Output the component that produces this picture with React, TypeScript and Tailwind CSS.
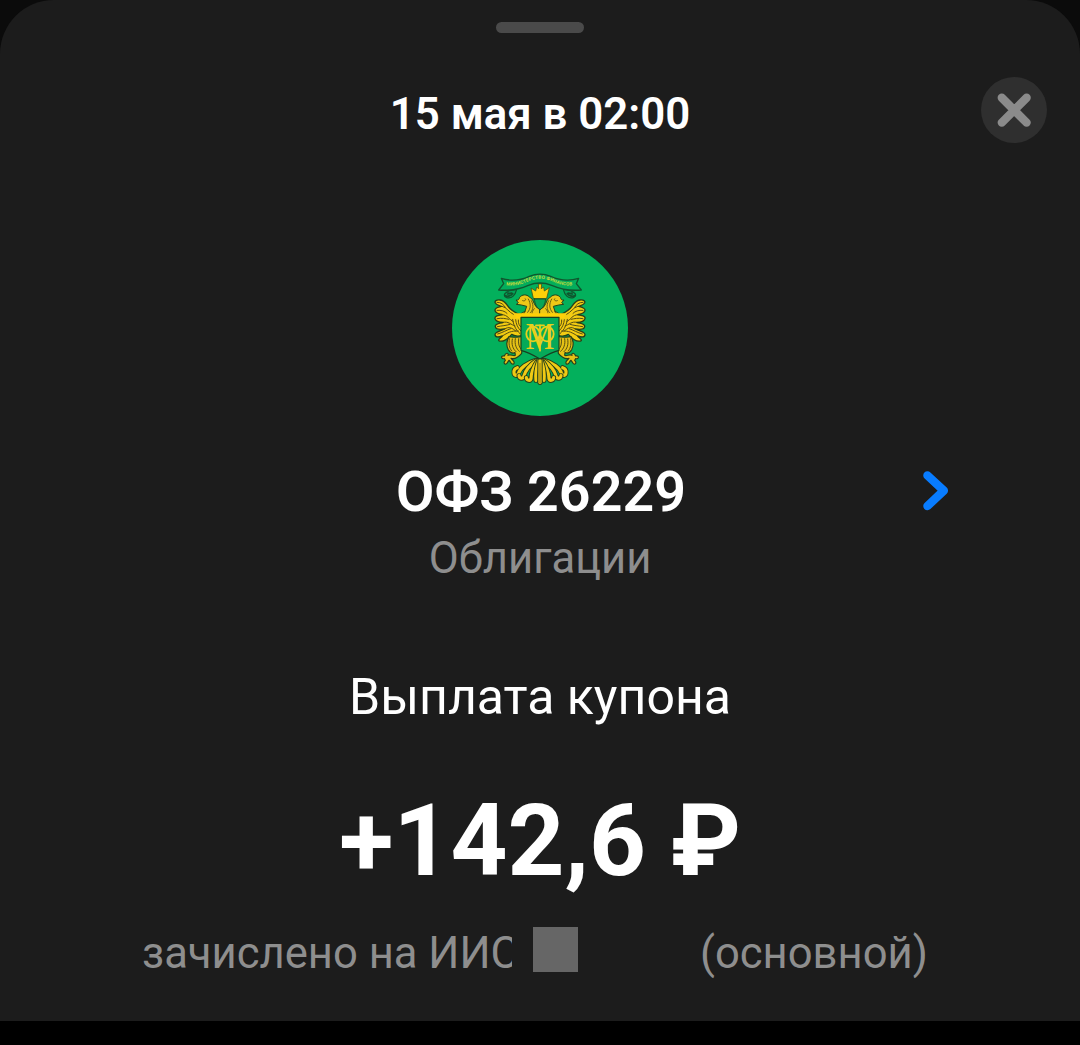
import { ReactNode } from "react";

export default function App() {
  return (
    <div className="w-full h-[1045px] bg-black overflow-hidden font-['Roboto','Noto_Sans',sans-serif]">
      <div className="bg-[#0b0b0b]">
        <div className="h-[1021px] rounded-t-[54px] bg-[#1c1c1c] flex flex-col items-center pt-[22px]">
          <div className="w-22 h-[11px] rounded-full bg-[#4a4a4a]" />
          <SheetHeader title="15 мая в 02:00" />
          <div className="w-44 h-44 mt-[97px] rounded-full bg-[#03b05c] overflow-hidden shrink-0">
            <Emblem />
          </div>
          <SecurityRow name="ОФЗ 26229" />
          <p className="text-[43.6px] leading-[52px] text-[#8e8e8e] mt-[8px]">
            Облигации
          </p>
          <p className="text-[50px] leading-[58px] text-white mt-[83px]">
            Выплата купона
          </p>
          <p className="text-[99.4px] leading-[116px] font-bold text-white mt-[57px] whitespace-nowrap">
            +142,6 ₽
          </p>
          <AccountRow />
        </div>
      </div>
    </div>
  );
}

const SheetHeader = ({ title }: { title: string }) => (
  <div className="w-full h-[66px] mt-11 grid grid-cols-[1fr_auto_1fr] items-center px-[33px] shrink-0">
    <span />
    <h1 className="text-[43.8px] leading-[52px] pt-[7px] font-semibold text-white whitespace-nowrap">
      {title}
    </h1>
    <button className="w-[66px] h-[66px] rounded-full bg-[#2f2f2f] justify-self-end flex items-center justify-center">
      <svg width="34" height="34" viewBox="0 0 34 34" fill="none">
        <path
          d="M4.8 4.8 29.6 29.6M29.6 4.8 4.8 29.6"
          stroke="#8b8b8b"
          strokeWidth="8.4"
          strokeLinecap="round"
        />
      </svg>
    </button>
  </div>
);

const SecurityRow = ({ name }: { name: string }) => (
  <div className="w-full grid grid-cols-[1fr_auto_1fr] items-center mt-[43px] pl-[133px] pr-[131px]">
    <span />
    <h2 className="text-[55.6px] leading-[66px] font-semibold text-white whitespace-nowrap">
      {name}
    </h2>
    <svg
      width="26"
      height="40"
      viewBox="0 0 26 40"
      fill="none"
      className="justify-self-end mb-[2px]"
    >
      <path
        d="M4.5 4.5 20.8 19.7 4.5 35"
        stroke="#087cff"
        strokeWidth="8.5"
        strokeLinecap="round"
        strokeLinejoin="round"
      />
    </svg>
  </div>
);

const AccountRow = () => (
  <div className="w-full flex items-start pl-[142px] mt-[26px] text-[43.6px] leading-[52px] text-[#8e8e8e] whitespace-nowrap">
    <span className="w-[370px] mt-[3px] overflow-hidden">
      зачислено на ИИС
    </span>
    <span className="w-[45px] h-[45px] ml-[21px] mt-[2px] bg-[#666666] shrink-0" />
    <span className="ml-[122px] mt-[3px]">(основной)</span>
  </div>
);

const Mirrored = ({ children }: { children: ReactNode }) => (
  <>
    <g>{children}</g>
    <g transform="translate(600 0) scale(-1 1)">{children}</g>
  </>
);

const feathers = [
  "M284 392C262 398 240 414 235 431C232 439 223 437 222 429C221 421 225 415 232 413",
  "M289 392C268 406 255 425 251 440C249 447 238 446 237 437",
  "M293 392C279 413 273 431 273 446C271 454 260 452 259 443",
  "M296 392C288 415 286 434 288 451",
];

// double-headed eagle, one half is drawn and mirrored around x=300
const Emblem = () => (
  <svg
    viewBox="36 30 528 528"
    className="w-full h-full"
    strokeLinejoin="round"
    strokeLinecap="round"
  >
    <Mirrored>
      {/* wing */}
      <path
        d="M246 258C230 250 213 243 205 230C200 222 193 211 180 210C169 209 163 213 166 219C169 225 178 226 184 229C174 231 164 233 165 241C167 252 180 251 187 254C176 256 163 258 165 266C167 277 180 277 190 277C179 281 164 281 166 290C168 300 183 299 194 297C183 303 165 305 165 314C166 324 178 321 187 318C180 326 172 330 178 333C190 336 204 326 215 313C224 319 239 320 248 315V262Z"
        fill="#f3cc12"
        stroke="#28401a"
        strokeWidth="4"
      />
      <path
        d="M187 229C201 233 206 246 220 253M187 254C203 255 207 268 220 275M190 277C205 273 212 284 225 288M194 297C207 288 217 294 228 304M187 318C204 308 212 302 235 303M171 217C184 217 190 223 196 232M171 241C184 240 194 243 201 250M171 266C185 263 197 266 207 268M172 290C186 287 198 287 210 283M173 312C188 308 200 300 212 296M218 268C220 283 226 299 240 311M227 269C228 282 233 294 243 303M235 270C234 280 238 288 244 292"
        fill="none"
        stroke="#554e14"
        strokeWidth="3"
      />
      {/* leg and claw */}
      <path
        d="M207 320C199 333 198 346 205 359C209 366 217 371 225 368L226 376C220 380 212 371 204 376C207 367 196 368 193 378C180 376 184 388 193 386L196 391C187 400 197 407 202 398L207 391C213 395 213 406 221 402C226 397 218 390 213 385C224 388 235 382 245 370L248 318C233 325 219 321 207 320Z"
        fill="#e5c116"
        stroke="#28401a"
        strokeWidth="3.5"
      />
      <path
        d="M208 326C206 342 207 352 215 363M217 327C214 343 218 356 228 365M226 326C223 343 229 357 238 364M236 326C234 340 237 352 244 358"
        fill="none"
        stroke="#554e14"
        strokeWidth="3"
      />
      {/* tail */}
      {feathers.map((d) => (
        <g key={d} fill="none">
          <path d={d} stroke="#28401a" strokeWidth="15" />
          <path d={d} stroke="#efca15" strokeWidth="9.5" />
        </g>
      ))}
      {/* head and neck */}
      <path
        d="M300 262H239L244 250L255 244L260 229L244 225L229 223L235 218L228 210C235 212 237 208 239 202C246 193 260 192 268 201C280 206 279 217 288 230L300 239Z"
        fill="#eec817"
        stroke="#28401a"
        strokeWidth="3"
      />
      <path
        d="M248 212C254 215 260 209 256 206M265 207C273 221 273 235 263 247M274 212C284 229 277 244 270 249M251 252L256 244M283 236C278 241 276 247 276 251"
        fill="none"
        stroke="#544f15"
        strokeWidth="2.6"
      />
      {/* banner ends */}
      <path
        d="M187 180 202 183 230 178C226 195 216 207 200 203C188 198 193 187 206 186"
        fill="#03a358"
        stroke="#10552d"
        strokeWidth="3.5"
      />
      <path
        d="M196 197C203 201 213 197 218 191M203 192L215 189"
        stroke="#10552d"
        strokeWidth="5"
        fill="none"
      />
    </Mirrored>

    <path
      d="M300 392V457"
      stroke="#28401a"
      strokeWidth="16"
    />
    <path
      d="M300 392V457"
      stroke="#efca15"
      strokeWidth="10"
    />
    <path
      d="M300 400V458"
      stroke="#685c13"
      strokeWidth="2"
    />

    {/* crown */}
    <path
      d="M280 205 273 174 287 183 290 171 296 176 295 162H305L304 176 311 171 313 183 328 173 320 205Z"
      fill="#ffd008"
      stroke="#4b5418"
      strokeWidth="2.5"
    />
    <path
      d="M283 207H317C315 223 310 234 300 239C290 234 285 223 283 207Z"
      fill="#09a657"
      stroke="#28401a"
      strokeWidth="2.5"
    />

    {/* banner */}
    <path
      d="M184 145C222 157 248 148 268 139C289 130 311 130 332 139C352 148 378 157 416 145L409 161L424 180C383 184 356 175 335 166C310 156 290 156 265 166C244 175 217 184 176 180L191 161Z"
      fill="#03ad5b"
      stroke="#10552d"
      strokeWidth="4"
    />
    <path
      id="banner-line"
      d="M199 166C230 169 248 161 265 154C289 144 311 144 335 154C352 161 370 169 401 166"
      fill="none"
    />
    <text
      fill="#c3da3c"
      fontSize="14"
      fontWeight="700"
      className="font-['Roboto',sans-serif]"
    >
      <textPath href="#banner-line" textLength="204" lengthAdjust="spacing">
        МИНИСТЕРСТВО ФИНАНСОВ
      </textPath>
    </text>

    {/* shield with monogram */}
    <path
      d="M226 250H374V264H226Z"
      fill="#ffd008"
    />
    <path
      d="M243 262H357V361C340 365 322 374 300 387C278 374 260 365 243 361Z"
      fill="#06aa59"
      stroke="#173f20"
      strokeWidth="3.5"
    />
    <text
      transform="translate(300 356) scale(.87 1)"
      fontSize="112"
      fill="#e9cf1c"
      textAnchor="middle"
      className="font-['Liberation_Serif',serif]"
    >
      М
    </text>
    <g fill="none" stroke="#e9cf1c" strokeWidth="5.5">
      <ellipse cx="279" cy="312" rx="20" ry="22" />
      <ellipse cx="321" cy="312" rx="20" ry="22" />
      <line x1="300" y1="286" x2="300" y2="362" />
      <line x1="288" y1="286" x2="312" y2="286" />
    </g>
  </svg>
);
